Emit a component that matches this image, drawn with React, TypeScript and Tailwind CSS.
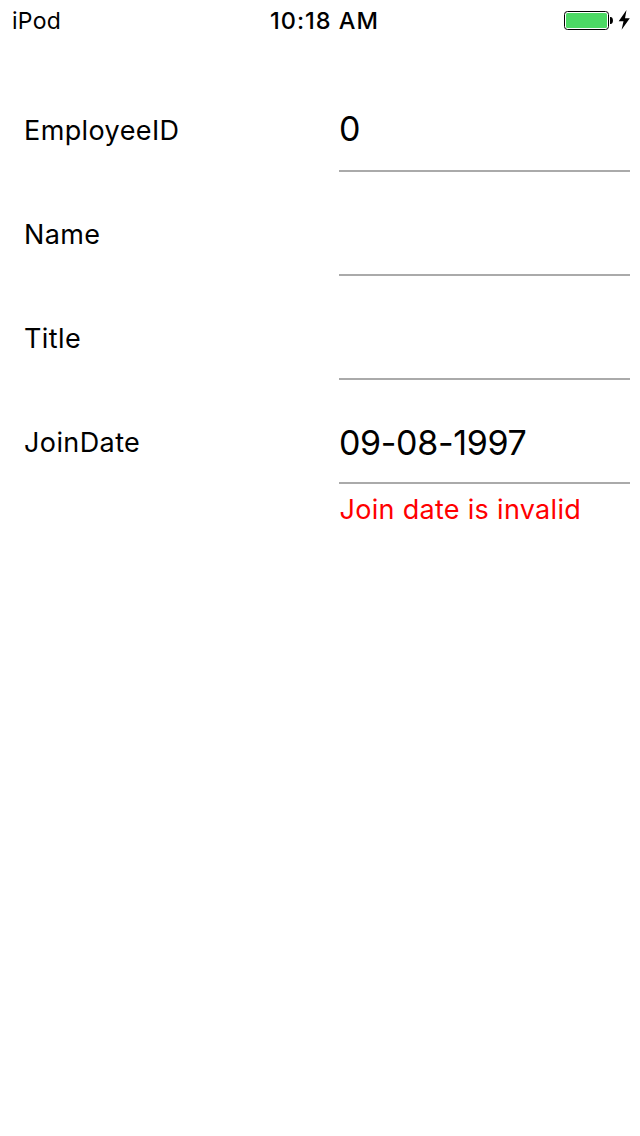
const rows = [
  { label: "EmployeeID", value: "0", pad: "pt-[41px]" },
  { label: "Name", value: "", pad: "pt-[41px]" },
  { label: "Title", value: "", pad: "pt-[41px]" },
  { label: "JoinDate", value: "09-08-1997", pad: "pt-[43px]" },
];

function StatusBar() {
  return (
    <header className="flex h-10 items-center justify-between pl-3 pr-2 leading-10">
      <span className="w-[258px] pt-0.5 text-[23px] tracking-[0.3px]">iPod</span>
      <span className="flex-1 pt-0.5 text-[23.5px] font-medium tracking-[1px] whitespace-nowrap">10:18 AM</span>
      <svg width="68" height="40" viewBox="564 0 68 40">
        <rect x="564.5" y="11.5" width="44" height="18" rx="3" fill="#fff" stroke="#000" />
        <rect x="566" y="13" width="41" height="15" rx="1.5" fill="#4cd964" />
        <path d="M610 17h.5c3.300 0 3.300 7 0 7h-.5z" fill="#000" />
        <path d="M626.500 10l-7.800 11.200h4.800l-1.900 8.600 8.200-11.500h-4.800z" fill="#000" />
      </svg>
    </header>
  );
}

export default function App() {
  return (
    <div className="h-[1136px] w-full bg-white font-['Inter',sans-serif] text-black">
      <StatusBar />
      <main className="flex flex-col pt-7">
        {rows.map((row) => (
          <div key={row.label} className="flex h-[104px] pl-6 pr-2.5">
            <div className="w-[315px] pt-[43px] text-[27px] leading-10 tracking-[0.4px]">{row.label}</div>
            <div className={`h-[104px] flex-1 border-b-2 border-[#aaaaaa] ${row.pad} text-[34px] leading-10 tracking-[-0.35px]`}>
              {row.value}
            </div>
          </div>
        ))}
        <p className="pl-[339.5px] pt-1.5 text-[27px] leading-10 tracking-[0.3px] text-[#ff0000]">Join date is invalid</p>
      </main>
    </div>
  );
}
